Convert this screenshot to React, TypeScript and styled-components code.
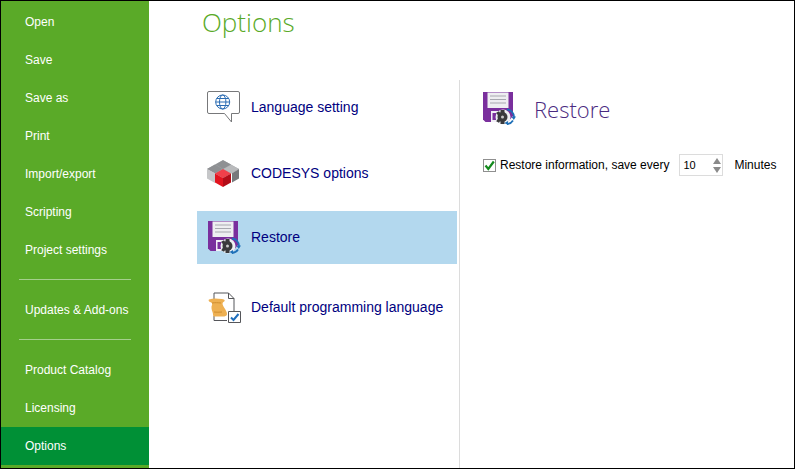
import React from "react";
import styled, { createGlobalStyle } from "styled-components";

const GlobalStyle = createGlobalStyle`
  * { box-sizing: border-box; }
  html, body { margin: 0; padding: 0; background: #fff; }
`;

const sideTop = ["Open", "Save", "Save as", "Print", "Import/export", "Scripting", "Project settings"];
const sideBottom = ["Product Catalog", "Licensing"];

const LanguageIcon = () => (
  <svg width="33" height="34" viewBox="0 0 33 34" fill="none">
    <path d="M2 1.500h29a1.500 1.500 0 0 1 1.500 1.500v19a1.500 1.500 0 0 1-1.500 1.500h-6.500v8.500l-7-8.500H2a1.500 1.500 0 0 1-1.500-1.500V3A1.500 1.500 0 0 1 2 1.500z" fill="#fff" stroke="#77787a" />
    <g stroke="#2b6cb3" strokeWidth="1">
      <circle cx="15.700" cy="12" r="7" />
      <ellipse cx="15.700" cy="12" rx="3.200" ry="7" />
      <path d="M8.700 12h14M9.700 8.500h12M9.700 15.500h12" />
    </g>
  </svg>
);

const CodesysIcon = () => (
  <svg width="33" height="28" viewBox="0 0 33 28" fill="none">
    <path d="M0 10 16 1 32 10 16 19z" fill="#a9abae" />
    <path d="M0 10 8 5.500 15.500 10 8 14.200zM16 1.200 24 5.600 16 10 8.500 5.500z" fill="#8e9093" />
    <path d="M24 6 32 10 24.500 14.500 16.500 10z" fill="#b9babc" />
    <path d="M0 10v9.500l8 4.500v-9.800z" fill="#c6c7c9" />
    <path d="M32 10v9.500l-7 4V14.300z" fill="#77797c" />
    <path d="M8 14.500 16 10l8 4.500-8 4.500z" fill="#f0404a" />
    <path d="M8 14.500v9l8 4.500v-9z" fill="#e2141f" />
    <path d="M24 14.500v9L16 28v-9z" fill="#b30d18" />
  </svg>
);

const RestoreIcon = () => (
  <svg width="33" height="33" viewBox="0 0 33 33" fill="none">
    <path d="M0 0h30v24l-5 6H2.500L0 27.500z" fill="#7a2f9d" />
    <path d="M4.500 0.500h21v15.500h-21z" fill="#eeeef1" />
    <path d="M7 4h16M7 7.500h16M7 11h16" stroke="#a8a8b0" strokeWidth="1.200" />
    <path d="M8 19h13V30H8z" fill="#f2eef6" />
    <path d="M9.500 21h5v7h-5z" fill="#7a2f9d" />
    <circle cx="20" cy="25" r="7.500" fill="#eef0f2" />
    <g fill="#3a3a3c">
      <circle cx="19.500" cy="25" r="5" />
      <path d="M17.500 18h4v3h-4zM17.500 29h4v3h-4zM13.200 20.800l2.800-1.500 2 3-2.800 1.500zM13.200 29.200l2.800 1.500 2-3-2.800-1.500z" />
    </g>
    <circle cx="19.500" cy="25" r="1.500" fill="#c9c9c9" />
    <path d="M24 17.500a7.500 7.500 0 0 1 7 7.500" stroke="#1f70b8" strokeWidth="1.800" />
    <path d="M33 24.500l-2.200 3.400-2.400-3.200z" fill="#1f70b8" />
    <path d="M30 28.500a7.500 7.500 0 0 1-6 3.500" stroke="#1f70b8" strokeWidth="1.800" />
    <path d="M25 29v4l-3.600-2z" fill="#1f70b8" />
  </svg>
);

const ScrollIcon = () => (
  <svg width="33" height="31" viewBox="0 0 33 31" fill="none">
    <path d="M6 11V1h14.500l5.500 5.500V20M20.500 1v5.500H26M6 24v4.500h13" stroke="#55565a" fill="none" />
    <path d="M1 7.500c4-1.500 8-1 13-.500 3 .2 3.500 2 1.500 3-1 .5-1.500 2 0 4.500 1.500 2.500 4 6 3.500 8-.500 1.500-2 2-4 2H6.500c-2 0-1-2-2-4.500-1-2.500-1.500-5-.500-7 .5-1 0-2.500-2-3-1.300-.4-1.800-2-1-2.500z" fill="#eeb052" />
    <path d="M4 11c3-.5 6-.3 9 0M6 20c2.500 .3 5 .3 8 0" stroke="#d08f30" />
    <path d="M20.500 19.500h12v11h-12z" fill="#fff" stroke="#55565a" />
    <path d="M23 25.500l2.500 2.500 5-6" stroke="#1f6fbd" strokeWidth="2" />
  </svg>
);

const CheckMark = () => (
  <svg width="11" height="11" viewBox="0 0 11 11" fill="none">
    <path d="M1.500 5.500 4.300 9 9.800 1.500" stroke="#138a1d" strokeWidth="2.200" />
  </svg>
);

const App: React.FC = () => {
  return (
    <>
      <GlobalStyle />
      <Window>
        <Sidebar>
          {sideTop.map((label) => (
            <SideItem key={label}>{label}</SideItem>
          ))}
          <SideRule />
          <SideItem>Updates &amp; Add-ons</SideItem>
          <SideRule />
          {sideBottom.map((label) => (
            <SideItem key={label}>{label}</SideItem>
          ))}
          <SideItem $active>Options</SideItem>
        </Sidebar>
        <Main>
          <PageTitle>Options</PageTitle>
          <Columns>
            <CategoryList>
              <Category $height={53} $top={1}>
                <IconSlot $left={10}><LanguageIcon /></IconSlot>
                Language setting
              </Category>
              <Category $height={78} $top={2}>
                <IconSlot $left={10}><CodesysIcon /></IconSlot>
                CODESYS options
              </Category>
              <Category $height={53} $bottom={1} $selected>
                <IconSlot $left={11}><RestoreIcon /></IconSlot>
                Restore
              </Category>
              <Category $height={86}>
                <IconSlot $left={11}><ScrollIcon /></IconSlot>
                Default programming language
              </Category>
            </CategoryList>
            <Detail>
              <DetailHeader>
                <RestoreIcon />
                <DetailTitle>Restore</DetailTitle>
              </DetailHeader>
              <SettingRow>
                <CheckBox><CheckMark /></CheckBox>
                <SettingLabel>Restore information, save every</SettingLabel>
                <Spinner>
                  10
                  <SpinArrows>
                    <ArrowUp />
                    <ArrowDown />
                  </SpinArrows>
                </Spinner>
                <SettingLabel>Minutes</SettingLabel>
              </SettingRow>
            </Detail>
          </Columns>
        </Main>
      </Window>
    </>
  );
};

export default App;

const Window = styled.div`
  width: 795px;
  height: 469px;
  display: flex;
  overflow: hidden;
  border: 1px solid #000;
  font-family: "Liberation Sans", Arial, sans-serif;
`;

const Sidebar = styled.nav`
  width: 148px;
  flex-shrink: 0;
  padding-top: 2px;
  background: #5aaa28;
`;

const SideItem = styled.div<{ $active?: boolean }>`
  height: 38px;
  padding-left: 24px;
  display: flex;
  align-items: center;
  color: #fff;
  font-size: 12px;
  background: ${(p) => (p.$active ? "#009036" : "transparent")};
`;

const SideRule = styled.div`
  height: 1px;
  margin: 10px 18px 11px 18px;
  background: #a5cf8c;
`;

const Main = styled.main`
  flex: 1;
  min-width: 0;
  display: flex;
  flex-direction: column;
`;

const PageTitle = styled.h1`
  height: 79px;
  margin: 0;
  padding: 2px 0 0 53px;
  color: #5aaa28;
  font-family: "Open Sans", sans-serif;
  font-size: 26px;
  font-weight: 300;
  line-height: 38px;
`;

const Columns = styled.div`
  flex: 1;
  display: flex;
`;

const CategoryList = styled.div`
  width: 311px;
  flex-shrink: 0;
  padding-left: 48px;
  padding-right: 2px;
  border-right: 1px solid #dcdcdc;
`;

const Category = styled.div<{ $height: number; $top?: number; $bottom?: number; $selected?: boolean }>`
  height: ${(p) => p.$height}px;
  padding-top: ${(p) => p.$top ?? 0}px;
  padding-bottom: ${(p) => p.$bottom ?? 0}px;
  display: flex;
  align-items: center;
  color: #000080;
  font-size: 14px;
  background: ${(p) => (p.$selected ? "#b3d8ee" : "transparent")};
`;

const IconSlot = styled.div<{ $left: number }>`
  width: 54px;
  padding-left: ${(p) => p.$left}px;
  display: flex;
  align-items: center;
  flex-shrink: 0;
`;

const Detail = styled.div`
  flex: 1;
  padding: 12px 0 0 23px;
`;

const DetailHeader = styled.div`
  display: flex;
  align-items: center;
  gap: 18px;
  height: 33px;
  margin-bottom: 29px;
`;

const DetailTitle = styled.h2`
  margin: 0;
  color: #4a2a80;
  font-family: "Open Sans", sans-serif;
  font-size: 22px;
  font-weight: 300;
`;

const SettingRow = styled.div`
  display: flex;
  align-items: center;
  height: 22px;
  color: #000;
  font-size: 12px;
`;

const CheckBox = styled.span`
  width: 13px;
  height: 13px;
  margin-right: 4px;
  display: flex;
  align-items: center;
  justify-content: center;
  border: 1px solid #8f8f8f;
  background: #fff;
`;

const SettingLabel = styled.span`
  white-space: nowrap;
`;

const Spinner = styled.div`
  width: 44px;
  height: 22px;
  margin: 0 11px 0 10px;
  padding-left: 3px;
  display: flex;
  align-items: center;
  justify-content: space-between;
  border: 1px solid #dcdcdc;
  font-size: 11px;
  color: #000;
`;

const SpinArrows = styled.div`
  display: flex;
  flex-direction: column;
  gap: 3px;
  margin-right: 1px;
`;

const ArrowUp = styled.span`
  width: 0;
  height: 0;
  border-left: 4px solid transparent;
  border-right: 4px solid transparent;
  border-bottom: 6px solid #8a8a8a;
`;

const ArrowDown = styled.span`
  width: 0;
  height: 0;
  border-left: 4px solid transparent;
  border-right: 4px solid transparent;
  border-top: 6px solid #8a8a8a;
`;
